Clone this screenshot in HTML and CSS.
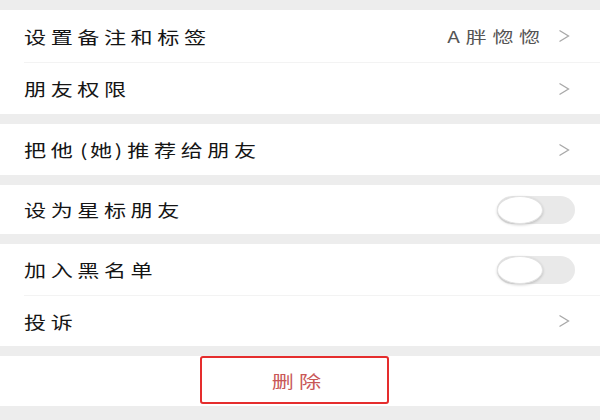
FILE: index.html
```html
<!DOCTYPE html>
<html lang="zh-CN">
<head>
    <meta charset="UTF-8">
    <meta name="viewport" content="width=device-width, initial-scale=1.0">
    <title>资料设置</title>
    <link rel="stylesheet" href="styles.css">
</head>
<body>
    <div class="page">
        <div class="group tall">
            <div class="row">
                <span class="label">设置备注和标签</span>
                <span class="extra">
                    <span class="value">A胖惚惚</span>
                    <svg class="chevron" width="12" height="14" viewBox="0 0 12 14"><polyline points="1.5,1.5 10.5,7 1.5,12.5" /></svg>
                </span>
            </div>
            <div class="row">
                <span class="label">朋友权限</span>
                <svg class="chevron" width="12" height="14" viewBox="0 0 12 14"><polyline points="1.5,1.5 10.5,7 1.5,12.5" /></svg>
            </div>
        </div>

        <div class="group">
            <div class="row">
                <span class="label">把他<span class="paren">(她)</span>推荐给朋友</span>
                <svg class="chevron" width="12" height="14" viewBox="0 0 12 14"><polyline points="1.5,1.5 10.5,7 1.5,12.5" /></svg>
            </div>
        </div>

        <div class="group short">
            <div class="row switch-row">
                <span class="label">设为星标朋友</span>
                <span class="switch"><span class="knob"></span></span>
            </div>
        </div>

        <div class="group">
            <div class="row switch-row">
                <span class="label">加入黑名单</span>
                <span class="switch"><span class="knob"></span></span>
            </div>
            <div class="row">
                <span class="label">投诉</span>
                <svg class="chevron" width="12" height="14" viewBox="0 0 12 14"><polyline points="1.5,1.5 10.5,7 1.5,12.5" /></svg>
            </div>
        </div>

        <div class="group danger">
            <button class="delete-btn"><span class="delete-text">删除</span></button>
        </div>
    </div>
</body>
</html>
```

FILE: styles.css
```css
body {
    margin: 0;
    background-color: #ededed;
    font-family: "Noto Sans CJK SC", "Noto Sans", sans-serif;
    color: #151515;
}
.page {
    padding-top: 10px;
}
.group {
    background-color: #fff;
    margin-bottom: 10px;
}
.row {
    box-sizing: border-box;
    height: 51px;
    margin-left: 24px;
    padding-right: 30px;
    display: flex;
    align-items: center;
    justify-content: space-between;
}
.tall .row {
    height: 52px;
}
.short .row {
    height: 49px;
}
.row + .row {
    border-top: 1px solid #f3f3f3;
}
.switch-row {
    padding-right: 25px;
}
/* the source screen is stretched sideways, so the text is too */
.label {
    display: inline-block;
    font-size: 17px;
    letter-spacing: 3.5px;
    transform: scaleX(1.3);
    transform-origin: left center;
}
.paren {
    letter-spacing: 2px;
    margin: 0 2px;
}
.extra {
    display: flex;
    align-items: center;
    gap: 12px;
}
.value {
    display: inline-block;
    font-size: 16px;
    letter-spacing: 4.5px;
    color: #555;
    transform: scaleX(1.3);
    transform-origin: right center;
}
.chevron {
    fill: none;
    stroke: #a8a8a8;
    stroke-width: 1.3;
}
.switch {
    width: 78px;
    height: 28px;
    border-radius: 15px / 14px;
    background-color: #e9e9e9;
    display: flex;
}
.knob {
    box-sizing: border-box;
    width: 46px;
    height: 28px;
    border-radius: 50%;
    background-color: #fff;
    border: 1px solid #e2e2e2;
    box-shadow: 0 1px 3px rgba(0, 0, 0, 0.2);
}
.danger {
    height: 50px;
    display: flex;
    justify-content: center;
    padding-right: 12px;
}
.delete-btn {
    width: 189px;
    height: 48px;
    background: #fff;
    border: 2px solid #e52d2d;
    border-radius: 3px;
    color: #c95757;
    font-family: inherit;
    padding: 0 0 0 10px;
}
.delete-text {
    display: inline-block;
    font-size: 17px;
    letter-spacing: 4px;
    transform: scaleX(1.3);
}
```
